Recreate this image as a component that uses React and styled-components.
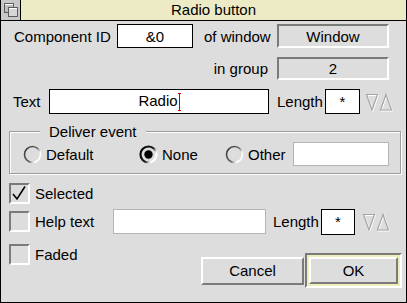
import React from 'react'
import styled, { createGlobalStyle } from 'styled-components'

const Global = createGlobalStyle`
  html, body { margin:0; padding:0; background:#dddddd; }
  body { font-family:"Liberation Sans", Arial, sans-serif; font-size:15px; color:#000; }
  * { box-sizing:border-box; }
`

const Window = styled.div`
  width:407px;
  height:303px;
  border:1px solid #000;
  border-top:none;
  background:#dddddd;
  display:flex;
  flex-direction:column;
  overflow:hidden;
`
const TitleBar = styled.div`
  display:flex;
  height:21px;
  border-bottom:1px solid #000;
  flex:none;
`
const BackIcon = styled.div`
  width:20px;
  height:20px;
  border-right:1px solid #000;
  background:#c8c8c8;
  display:flex;
  align-items:center;
  justify-content:center;
`
const Title = styled.div`
  flex:1;
  display:flex;
  align-items:center;
  justify-content:center;
  background:#ecebc6;
  line-height:20px;
`
const Body = styled.div`
  display:flex;
  flex-direction:column;
  padding:0 6px 0 8px;
`
const Row = styled.div`
  display:flex;
  align-items:center;
  height:${p => p.h}px;
  margin-top:${p => p.mt}px;
  padding-left:${p => p.pl || 0}px;
  padding-right:${p => p.pr || 0}px;
  justify-content:${p => p.end ? 'flex-end' : 'flex-start'};
`
const Label = styled.span`
  width:${p => p.w ? p.w + 'px' : 'auto'};
  margin-left:${p => p.ml || 0}px;
  margin-right:${p => p.mr || 0}px;
  white-space:nowrap;
  flex:none;
`
const Writable = styled.div`
  width:${p => p.w}px;
  height:${p => p.h}px;
  background:#fff;
  border:1px solid ${p => p.faint ? '#b4b4b4' : '#000'};
  display:flex;
  align-items:center;
  justify-content:center;
  flex:none;
  margin-left:${p => p.ml || 0}px;
`
const Display = styled.div`
  width:${p => p.w}px;
  height:${p => p.h}px;
  border:2px solid;
  border-color:#7a7a7a #ffffff #ffffff #7a7a7a;
  display:flex;
  align-items:center;
  justify-content:center;
  flex:none;
`
const Caret = styled.span`
  display:inline-block;
  width:1px;
  height:18px;
  background:#d00000;
  margin-left:1px;
  vertical-align:middle;
  position:relative;
  &::before, &::after {
    content:'';
    position:absolute;
    left:-1px;
    width:3px;
    height:1px;
    background:#d00000;
  }
  &::before { top:0; }
  &::after { bottom:0; }
`
const Group = styled.fieldset`
  margin:9px 0 0 0;
  padding:0 0 6px 13px;
  width:392px;
  border:1px solid #9c9c9c;
  box-shadow:inset 1px 1px 0 #fff, 1px 1px 0 #fff;
`
const Legend = styled.legend`
  margin-left:17px;
  padding:0 9px;
  background:#dddddd;
  line-height:17px;
`
const RadioItem = styled.div`
  display:flex;
  align-items:center;
  width:${p => p.w ? p.w + 'px' : 'auto'};
  flex:none;
`
const RadioRow = styled.div`
  display:flex;
  align-items:center;
  height:26px;
  margin-top:1px;
`
const Box = styled.div`
  width:21px;
  height:21px;
  border:2px solid;
  border-color:#7a7a7a #ffffff #ffffff #7a7a7a;
  flex:none;
  display:flex;
  align-items:center;
  justify-content:center;
`
const Bottom = styled.div`
  display:flex;
  align-items:flex-start;
`
const Buttons = styled.div`
  display:flex;
  align-items:center;
  margin-left:auto;
  margin-top:19px;
  margin-right:-2px;
  gap:1px;
`
const Button = styled.div`
  width:${p => p.fill ? '100%' : p.w + 'px'};
  height:${p => p.fill ? '100%' : p.h + 'px'};
  background:#dddddd;
  border:2px solid;
  border-color:#ffffff #7a7a7a #7a7a7a #ffffff;
  display:flex;
  align-items:center;
  justify-content:center;
`
const DefaultFrame = styled.div`
  width:97px;
  height:35px;
  border:2px solid;
  border-color:#7a7a7a #ffffff #ffffff #7a7a7a;
  background:#eeeebb;
  padding:2px;
  display:flex;
`

const Radio = ({ on }) => (
  <svg width="19" height="19" viewBox="0 0 19 19" style={{ flex: 'none' }}>
    <defs>
      <linearGradient id={on ? 'rg1' : 'rg0'} x1="0" y1="0.2" x2="1" y2="0.8">
        <stop offset="0" stopColor={on ? '#000' : '#3a3a3a'} />
        <stop offset="0.55" stopColor={on ? '#222' : '#6a6a6a'} />
        <stop offset="0.8" stopColor="#ffffff" />
        <stop offset="1" stopColor="#ffffff" />
      </linearGradient>
    </defs>
    <circle cx="9.5" cy="9.5" r="8" fill="#dddddd" stroke={`url(#${on ? 'rg1' : 'rg0'})`} strokeWidth={on ? 2.2 : 1.6} />
    {on && <circle cx="9.5" cy="9.5" r="4.2" fill="#000" />}
  </svg>
)

const Arrows = ({ ml }) => (
  <svg width="28" height="20" viewBox="0 0 28 20" style={{ marginLeft: ml, flex: 'none' }}>
    <polygon points="1.5,2.5 12.5,2.5 7,18" fill="none" stroke="#ffffff" strokeWidth="1.2" transform="translate(0.8,0.8)" />
    <polygon points="1.5,2.5 12.5,2.5 7,18" fill="none" stroke="#a4a4a4" strokeWidth="1.2" />
    <polygon points="21,2.5 26.5,18 15.5,18" fill="none" stroke="#ffffff" strokeWidth="1.2" transform="translate(0.8,0.8)" />
    <polygon points="21,2.5 26.5,18 15.5,18" fill="none" stroke="#a4a4a4" strokeWidth="1.2" />
  </svg>
)

const Tick = () => (
  <svg width="17" height="17" viewBox="0 0 17 17">
    <path d="M2 9 L6 14 L14 1.5" fill="none" stroke="#000" strokeWidth="1.6" />
  </svg>
)

const Back = () => (
  <svg width="16" height="16" viewBox="0 0 16 16">
    <rect x="1.5" y="1.5" width="9" height="9" fill="#bdbdbd" stroke="#5c5c5c" />
    <rect x="2" y="2" width="8" height="1" fill="#fff" />
    <rect x="5.5" y="5.5" width="9" height="9" fill="#d6d6d6" stroke="#5c5c5c" />
    <rect x="6" y="6" width="8" height="1" fill="#fff" />
  </svg>
)

export default function App() {
  return (
    <>
      <Global />
      <Window>
        <TitleBar>
          <BackIcon><Back /></BackIcon>
          <Title>Radio button</Title>
        </TitleBar>
        <Body>
          <Row h={24} mt={3} pl={5}>
            <Label w={103}>Component ID</Label>
            <Writable w={76} h={24}>&amp;0</Writable>
            <Label w={73} ml={11}>of window</Label>
            <Display w={112} h={24}>Window</Display>
          </Row>
          <Row h={23} mt={9} end pr={11}>
            <Label mr={9}>in group</Label>
            <Display w={112} h={23}>2</Display>
          </Row>
          <Row h={25} mt={9} pl={4}>
            <Label w={36}>Text</Label>
            <Writable w={220} h={25}><span>Radio<Caret /></span></Writable>
            <Label w={48} ml={8}>Length</Label>
            <Writable w={35} h={25}>*</Writable>
            <Arrows ml={5} />
          </Row>
          <Group>
            <Legend>Deliver event</Legend>
            <RadioRow>
              <RadioItem w={116}><Radio /><Label ml={4}>Default</Label></RadioItem>
              <RadioItem w={86}><Radio on /><Label ml={4}>None</Label></RadioItem>
              <RadioItem w={68}><Radio /><Label ml={4}>Other</Label></RadioItem>
              <Writable w={96} h={24} faint />
            </RadioRow>
          </Group>
          <Row h={22} mt={8}>
            <Box><Tick /></Box>
            <Label ml={5}>Selected</Label>
          </Row>
          <Row h={25} mt={5}>
            <Box />
            <Label w={78} ml={5}>Help text</Label>
            <Writable w={153} h={25} faint />
            <Label w={48} ml={7}>Length</Label>
            <Writable w={34} h={26}>*</Writable>
            <Arrows ml={7} />
          </Row>
          <Bottom>
            <Row h={22} mt={9}>
              <Box />
              <Label ml={5}>Faded</Label>
            </Row>
            <Buttons>
              <Button w={103} h={28}>Cancel</Button>
              <DefaultFrame>
                <Button fill>OK</Button>
              </DefaultFrame>
            </Buttons>
          </Bottom>
        </Body>
      </Window>
    </>
  )
}
